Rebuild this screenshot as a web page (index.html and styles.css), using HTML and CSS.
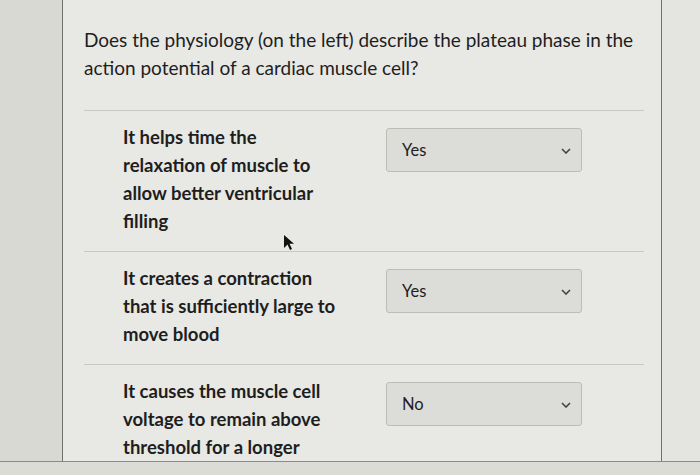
FILE: index.html
```html
<!DOCTYPE html>
<html>
<head>
<meta charset="utf-8">
<link rel="stylesheet" href="styles.css">
</head>
<body>
<div class="screen">
  <div class="side"></div>
  <div class="card">
    <p class="question">Does the physiology (on the left) describe the plateau phase in the action potential of a cardiac muscle cell?</p>
    <div class="row">
      <div class="stmt">It helps time the relaxation of muscle to allow better ventricular filling</div>
      <div class="select"><span>Yes</span><svg class="chev" viewBox="0 0 10 6" width="10" height="6"><path d="M1 1 L5 5 L9 1" fill="none" stroke="#444" stroke-width="1.6"/></svg></div>
    </div>
    <div class="row">
      <div class="stmt">It creates a contraction that is sufficiently large to move blood</div>
      <div class="select"><span>Yes</span><svg class="chev" viewBox="0 0 10 6" width="10" height="6"><path d="M1 1 L5 5 L9 1" fill="none" stroke="#444" stroke-width="1.6"/></svg></div>
    </div>
    <div class="row">
      <div class="stmt">It causes the muscle cell voltage to remain above threshold for a longer</div>
      <div class="select"><span>No</span><svg class="chev" viewBox="0 0 10 6" width="10" height="6"><path d="M1 1 L5 5 L9 1" fill="none" stroke="#444" stroke-width="1.6"/></svg></div>
    </div>
  </div>
  <div class="rightside"></div>
  <svg class="cursor" viewBox="0 0 12 18" width="12" height="18"><path d="M1 1 L1 14 L4.5 10.5 L7 16 L9 15 L6.5 9.8 L11 9.8 Z" fill="#111"/></svg>
</div>
<div class="bottom"></div>
</body>
</html>
```

FILE: styles.css
```css
html, body {
  margin: 0;
  padding: 0;
}
body {
  width: 700px;
  height: 475px;
  overflow: hidden;
  background: #dcdcd7;
  font-family: Lato, "Open Sans", sans-serif;
  color: #1e1e1e;
}
.screen {
  position: relative;
  display: flex;
  height: 461px;
  border-bottom: 1px solid #8a8a86;
}
.side {
  width: 62px;
  flex: none;
  background: #d9d9d4;
  border-right: 1px solid #6f6f6c;
}
.card {
  box-sizing: border-box;
  width: 599px;
  flex: none;
  padding: 0 17px 0 21px;
  background: #e8e8e4;
  overflow: hidden;
  border-right: 1px solid #6f6f6c;
}
.rightside {
  flex: 1;
  background: #e4e4e0;
}
.question {
  margin: 26px 0 28px;
  font-size: 19px;
  line-height: 28px;
}
.row {
  display: flex;
  align-items: flex-start;
  border-top: 1.5px solid #c9c9c4;
  padding: 12px 0 16px;
}
.stmt {
  margin-left: 39px;
  width: 215px;
  font-size: 18.5px;
  font-weight: 700;
  line-height: 28px;
}
.select {
  margin-left: 48px;
  margin-top: 5px;
  width: 196px;
  height: 44px;
  box-sizing: border-box;
  border: 1px solid #bdbdb8;
  border-radius: 3px;
  background: #dcdcd8;
  display: flex;
  align-items: center;
  justify-content: space-between;
  padding: 0 10px 0 15px;
  font-size: 16.5px;
}
.chev {
  margin-top: 2px;
}
.cursor {
  position: absolute;
  left: 283px;
  top: 234px;
}
.bottom {
  height: 13px;
  background: #dcdcd7;
}
```
